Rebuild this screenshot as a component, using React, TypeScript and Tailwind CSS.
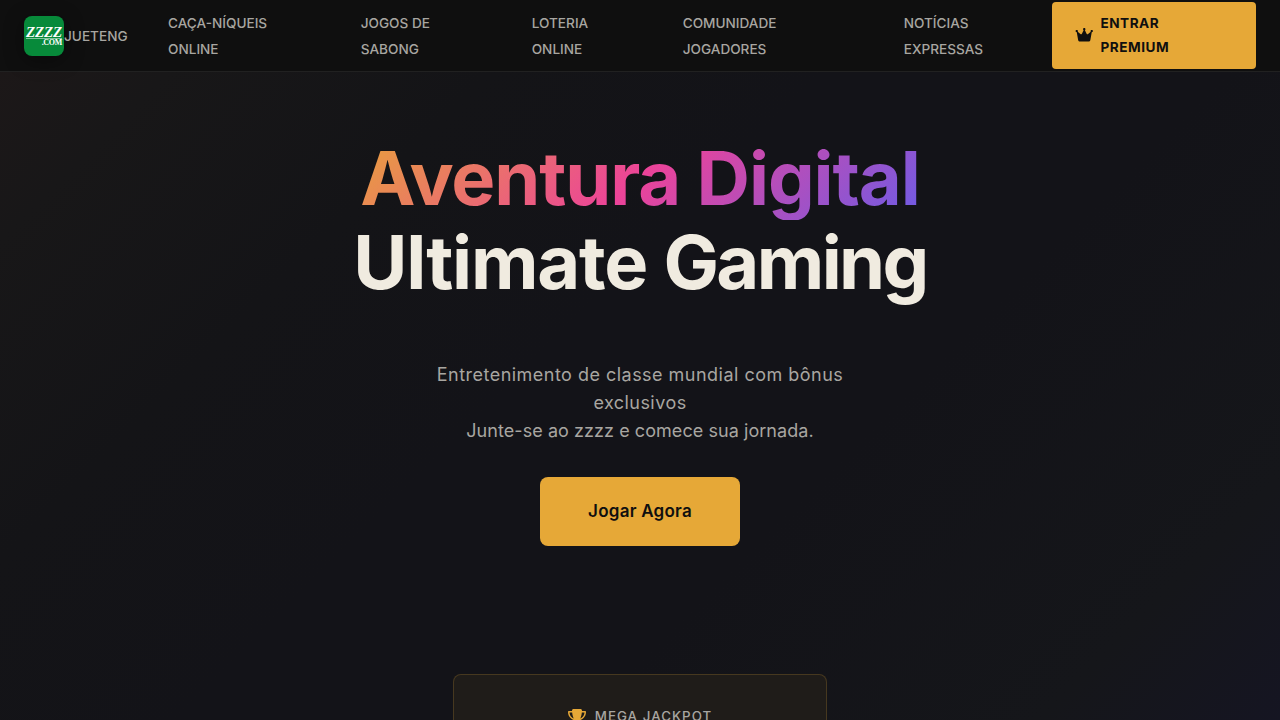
import React from 'react'
import { FaCrown, FaTrophy } from 'react-icons/fa6'

const navLinks = [
  { lines: ['CAÇA-NÍQUEIS', 'ONLINE'], width: 'w-[192.7px]' },
  { lines: ['JOGOS DE', 'SABONG'], width: 'w-[171px]' },
  { lines: ['LOTERIA', 'ONLINE'], width: 'w-[151px]' },
  { lines: ['COMUNIDADE', 'JOGADORES'], width: 'w-[221px]' },
  { lines: ['NOTÍCIAS', 'EXPRESSAS'], width: 'w-[148.3px]' },
]

const Logo: React.FC = () => (
  <div className="flex h-10 w-10 shrink-0 flex-col overflow-hidden rounded-lg bg-[#078a3a] pt-[10px] font-['Liberation_Serif',serif] font-bold text-white shadow-[0_4px_20px_rgba(0,0,0,0.4)]">
    <span className="pl-[2px] text-[15px] leading-[12px] tracking-[-0.2px] italic">ZZZZ</span>
    <span className="mx-[2px] h-px shrink-0 bg-white/50" />
    <span className="pr-[2px] text-right text-[8px] leading-[8px] tracking-[-0.3px]">.COM</span>
  </div>
)

const Header: React.FC = () => (
  <header className="h-[72px] border-b border-white/8 bg-[#0f0f0f]">
    <div className="flex h-[71px] items-center px-6">
      <Logo />
      <nav className="flex items-center text-[13.6px] leading-[26px] font-medium text-[#a8a6a1]">
        <a href="#" className="w-[104px]">JUETENG</a>
        {navLinks.map((link) => (
          <a key={link.lines.join(' ')} href="#" className={link.width}>
            {link.lines.map((line) => (
              <span key={line} className="block whitespace-nowrap">{line}</span>
            ))}
          </a>
        ))}
      </nav>
      <button className="flex h-[67px] w-[204px] items-center gap-[7px] rounded bg-[#e6a837] pr-6 pb-[2px] pl-[23px] text-left text-[13.6px] leading-6 font-bold tracking-[0.5px] text-[#0f0f0f]">
        <FaCrown className="h-[15.5px] w-[18.5px]" />
        <span>
          ENTRAR
          <br />
          PREMIUM
        </span>
      </button>
    </div>
  </header>
)

const App: React.FC = () => {
  return (
    <div className="h-screen overflow-hidden bg-[#131318] font-['Inter',sans-serif]">
      <div className="h-full bg-[linear-gradient(135deg,#1e1818_0%,#181718_12%,#141417_28%,#131318_45%,#131318_65%,#15161a_88%,#151522_100%)]">
        <Header />
        <main className="flex flex-col items-center pt-[64px] text-center">
          <h1 className="text-[74px] leading-[84px] font-bold text-[#f0ebe0]">
            <span className="block bg-[linear-gradient(135deg,#e8a33a_0%,#ec4399_50%,#6b5ce7_100%)] bg-clip-text tracking-[-1.1px] text-transparent">
              Aventura Digital
            </span>
            <span className="block tracking-[-1.2px]">
              Ultimate <span className="tracking-[-2.6px]">Gaming</span>
            </span>
          </h1>

          <p className="mt-[57px] text-[18px] leading-7 text-[#a8a6a1]">
            <span className="block tracking-[0.48px]">Entretenimento de classe mundial com bônus</span>
            <span className="block tracking-[0.45px]">exclusivos</span>
            <span className="block tracking-[0.06px]">Junte-se ao zzzz e comece sua jornada.</span>
          </p>

          <button className="mt-8 h-[69px] w-[200px] rounded-lg bg-[#e6a837] text-[17px] font-semibold tracking-[0.25px] text-[#0f0f0f]">
            Jogar Agora
          </button>

          {/* Jackpot */}
          <section className="mt-32 flex h-[180px] w-[374px] justify-center gap-[9px] rounded-lg border border-[#e6a837]/20 bg-[#1f1c19] pt-[28px]">
            <FaTrophy className="mt-[6px] h-4 w-[18px] text-[#e6a837]" />
            <span className="text-[13.3px] leading-[26px] font-medium tracking-[1.05px] text-[#a8a6a1]">MEGA JACKPOT</span>
          </section>
        </main>
      </div>
    </div>
  )
}

export default App
